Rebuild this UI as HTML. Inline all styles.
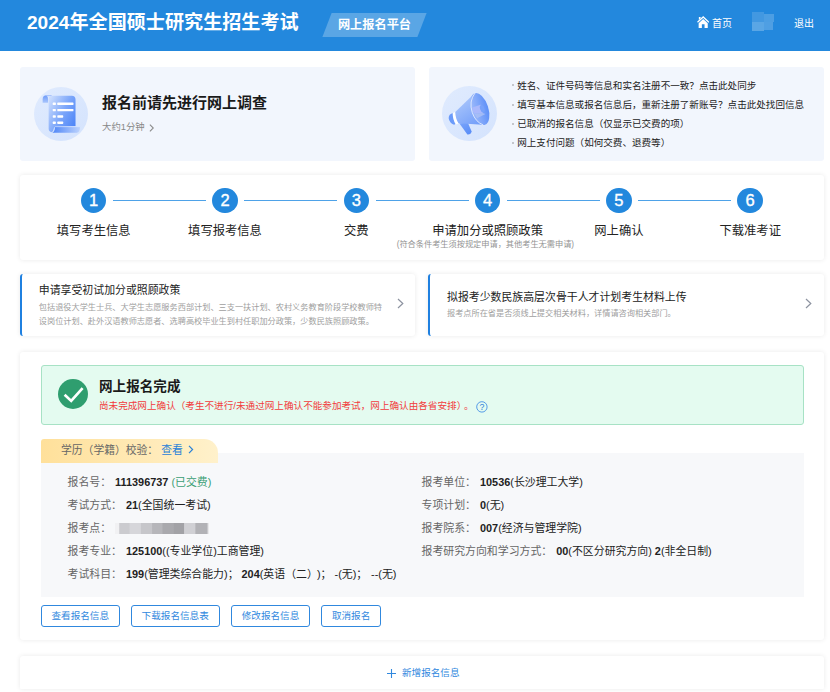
<!DOCTYPE html>
<html lang="zh-CN">
<head>
<meta charset="utf-8">
<title>2024年全国硕士研究生招生考试 网上报名平台</title>
<style>
*{box-sizing:border-box;margin:0;padding:0}
html,body{width:830px;height:692px;overflow:hidden;background:#fff}
body{font-family:"Liberation Sans","Noto Sans CJK SC",sans-serif;color:#222;position:relative;-webkit-font-smoothing:antialiased}
a{text-decoration:none;color:inherit}
.abs{position:absolute;white-space:nowrap}
/* header */
#hd{position:absolute;left:0;top:0;width:830px;height:51px;background:#2388dd}
#hd .title{left:27px;top:0;height:46px;line-height:46px;font-size:19.1px;font-weight:bold;color:#fff}
#hd .badge{left:327px;top:13px;width:95px;height:24px;background:rgba(255,255,255,.25);transform:skewX(-21deg)}
#hd .badgetx{left:327px;top:13px;width:95px;height:24px;line-height:24px;text-align:center;font-size:12.2px;font-weight:bold;color:#fff}
#hd .nav{top:1px;height:46px;line-height:46px;font-size:10px;color:#fff}
/* cards */
.card{position:absolute;background:#fff;border-radius:3px;box-shadow:0 0 5px rgba(0,0,0,.09)}
.info{position:absolute;background:#f2f6fd;border-radius:3px}
.bl{display:inline-block;width:2px;height:2px;background:#c4c6cc;vertical-align:middle;margin:0 3.5px 1px 1px}
.circ{position:absolute;width:55px;height:55px;border-radius:50%;background:linear-gradient(135deg,#e0ebfe,#d4e3fd)}
/* steps */
.step-c{position:absolute;top:188px;width:25.4px;height:25.4px;margin-left:.3px;border-radius:50%;background:#2388dd;color:#fff;font-size:16.5px;line-height:24px;text-align:center;-webkit-text-stroke:.35px #fff}
.step-l{position:absolute;top:200px;height:1.3px;background:#4ea2e8}
.step-t{position:absolute;top:220.6px;width:140px;text-align:center;font-size:12.3px;line-height:20px;color:#222}
/* policy */
.pol{position:absolute;top:274px;height:62px;background:#fff;border-radius:3px;box-shadow:0 0 5px rgba(0,0,0,.09);border-left:2.8px solid #1f80e0}
.pol .t{left:16.8px;font-size:10.9px;line-height:16px;color:#222}
.pol .d{left:16.8px;font-size:8.18px;line-height:14px;color:#a0a0a0}
.chev{position:absolute;width:7px;height:11px}
/* alert */
#alert{position:absolute;left:41px;top:365px;width:763px;height:59.8px;background:#e4fbf0;border:1px solid #a7e2c5;border-radius:3px}
/* tab */
#tab{position:absolute;left:41px;top:438.7px;width:176.5px;height:24.2px;border-radius:3px 14px 0 0;background:linear-gradient(90deg,#ffe09a,#fff1cb)}
#panel{position:absolute;left:41px;top:452.5px;width:763px;height:144.3px;background:#f7f8fa}
.row{position:absolute;margin-top:-.7px;font-size:10.9px;line-height:16px;white-space:nowrap;color:#222}
.row .k{color:#666;margin-right:4px}
.row b{font-weight:bold}
.btn{position:absolute;top:605px;height:21.8px;line-height:19.8px;border:1px solid #3088de;border-radius:3px;color:#3088de;font-size:9.6px;text-align:center;background:#fff}
</style>
</head>
<body>

<!-- header -->
<div id="hd">
  <div class="abs title">2024年全国硕士研究生招生考试</div>
  <div class="abs badge"></div>
  <div class="abs badgetx">网上报名平台</div>
  <svg class="abs" style="left:696.8px;top:15.8px" width="12.4" height="12.4" viewBox="0 0 12 12"><path d="M0.5 6.1 L6 0.9 L11.5 6.1" stroke="#fff" stroke-width="1.25" fill="none" stroke-linejoin="miter"/><path d="M6 2.9 L10.4 7 V12 H7.3 V8 H4.7 V12 H1.6 V7 Z M1.8 1 h1.7 v1.3 l-1.7 1.6z" fill="#fff"/></svg>
  <div class="abs nav" style="left:712px">首页</div>
  <div class="abs" style="left:752px;top:12.2px;width:12.2px;height:10.1px;background:rgba(255,255,255,.14)"></div><div class="abs" style="left:764.2px;top:13.6px;width:9.6px;height:8.7px;background:rgba(255,255,255,.19)"></div><div class="abs" style="left:752px;top:22.3px;width:12.2px;height:8.5px;background:rgba(255,255,255,.25)"></div><div class="abs" style="left:764.2px;top:22.3px;width:8.6px;height:7.7px;background:rgba(255,255,255,.2)"></div>
  <div class="abs nav" style="left:794px">退出</div>
</div>

<!-- info cards -->
<div class="info" style="left:20px;top:67px;width:395px;height:94px"></div>
<div class="circ" style="left:33.9px;top:86.9px;width:54.2px;height:54.2px"></div>
<svg class="abs" style="left:30px;top:84px" width="60" height="60" viewBox="0 0 692 692">
  <defs><linearGradient id="g1" x1="0" y1="0.15" x2="1" y2="0.85"><stop offset="0" stop-color="#c9dbfd"/><stop offset="0.5" stop-color="#7da7fa"/><stop offset="1" stop-color="#4a83f7"/></linearGradient>
  <linearGradient id="g2" x1="0" y1="0" x2="1" y2="0"><stop offset="0" stop-color="#4f86f7"/><stop offset="1" stop-color="#bdd3fd"/></linearGradient>
  <linearGradient id="g6" x1="0" y1="0" x2="0" y2="1"><stop offset="0" stop-color="#6f9cf9"/><stop offset="1" stop-color="#a9c5fc"/></linearGradient></defs>
  <path d="M146 216 V176 Q148 134 178 134 Q206 134 208 176 V216Z" fill="url(#g6)"/><path d="M178 131 H250 V140 H178Z" fill="#8db1fb"/>
  <path d="M215 178 Q215 136 257 136 H482 Q525 136 525 180 V486 H292 Q276 492 272 522 Q268 552 250 556 Q215 550 215 514 Z" fill="url(#g1)"/>
  <path d="M285 488 H578 Q578 560 540 563 H258 Q292 545 285 488Z" fill="url(#g2)"/>
  <path d="M287 492 H576" stroke="#fff" stroke-width="7" opacity=".75"/>
  <g fill="#fff"><rect x="262" y="214" width="36" height="28" rx="7"/><rect x="315" y="214" width="186" height="28" rx="7"/>
  <rect x="262" y="287" width="36" height="28" rx="7"/><rect x="315" y="287" width="186" height="28" rx="7"/>
  <rect x="262" y="361" width="36" height="28" rx="7"/><rect x="315" y="361" width="68" height="28" rx="7"/>
  <rect x="262" y="433" width="36" height="28" rx="7"/><rect x="315" y="433" width="68" height="28" rx="7"/></g>
</svg>
<div class="abs" style="left:102px;top:91px;font-size:15px;line-height:24px;font-weight:bold;color:#1a1a1a">报名前请先进行网上调查</div>
<div class="abs" style="left:102px;top:119px;font-size:9.4px;line-height:16px;color:#888">大约1分钟</div>
<svg class="abs" style="left:148.8px;top:123.5px" width="5.4" height="8" viewBox="0 0 5.4 8"><path d="M0.9 0.7 L4.3 4 L0.9 7.3" stroke="#8a8a8a" stroke-width="1.05" fill="none"/></svg>

<div class="info" style="left:429px;top:67px;width:395px;height:94px"></div>
<div class="circ" style="left:442px;top:86.4px"></div>
<svg class="abs" style="left:440px;top:84px" width="60" height="60" viewBox="0 0 692 692">
  <defs><linearGradient id="g3" x1="0.1" y1="0" x2="0.8" y2="1"><stop offset="0" stop-color="#b4cdfc"/><stop offset="1" stop-color="#6f9cf9"/></linearGradient>
  <linearGradient id="g4" x1="0" y1="0" x2="1" y2="0.2"><stop offset="0" stop-color="#a3befb"/><stop offset="1" stop-color="#6293f8"/></linearGradient>
  <linearGradient id="g5" x1="0" y1="0" x2="0.6" y2="1"><stop offset="0" stop-color="#7ba5fa"/><stop offset="1" stop-color="#5a8ef8"/></linearGradient></defs>
  <path d="M222 452 L322 446 L366 550 Q352 588 316 582 Z" fill="url(#g5)"/>
  <path d="M152 334 Q98 346 100 396 Q108 452 162 470 L190 456 Q152 402 152 334Z" fill="#6b9bfa"/>
  <path d="M146 336 L180 320 Q182 400 218 452 L182 466 Q146 410 146 336Z" fill="#fff"/>
  <path d="M176 322 L400 106 L560 300 L492 471 L214 454 Q178 400 176 322 Z" fill="url(#g3)"/>
  <ellipse cx="460" cy="288" rx="97" ry="192" transform="rotate(-18 460 288)" fill="url(#g4)"/>
  <path d="M395 340 L490 334 L524 346 L428 396Z" fill="#a9c0f4" opacity=".85"/>
  <path d="M372 272 L468 238 Q522 268 490 334 L394 340 Q372 312 372 272Z" fill="#aab9fc"/>
  <ellipse cx="487" cy="284" rx="25" ry="44" transform="rotate(-18 487 284)" fill="#76a1fa"/>
  <path d="M402 106 Q330 200 372 330 Q410 440 494 470" stroke="#fff" stroke-width="8" fill="none" stroke-linecap="round" opacity=".95"/>
</svg>
<div class="abs" style="left:510.7px;top:75.5px;font-size:9.57px;line-height:19.1px;color:#222">
  <div><span class="bl"></span>姓名、证件号码等信息和实名注册不一致？点击此处同步</div>
  <div><span class="bl"></span>填写基本信息或报名信息后，重新注册了新账号？点击此处找回信息</div>
  <div><span class="bl"></span>已取消的报名信息（仅显示已交费的项）</div>
  <div><span class="bl"></span>网上支付问题（如何交费、退费等）</div>
</div>

<!-- steps -->
<div class="card" style="left:20px;top:175px;width:804px;height:85px"></div>
<div class="step-l" style="left:113px;width:93px"></div>
<div class="step-l" style="left:244.3px;width:93px"></div>
<div class="step-l" style="left:375.6px;width:93px"></div>
<div class="step-l" style="left:506.9px;width:93px"></div>
<div class="step-l" style="left:638.2px;width:93px"></div>
<div class="step-c" style="left:80.7px">1</div>
<div class="step-c" style="left:212px">2</div>
<div class="step-c" style="left:343.3px">3</div>
<div class="step-c" style="left:474.6px">4</div>
<div class="step-c" style="left:605.9px">5</div>
<div class="step-c" style="left:737.2px">6</div>
<div class="step-t" style="left:23.7px">填写考生信息</div>
<div class="step-t" style="left:155px">填写报考信息</div>
<div class="step-t" style="left:286.3px">交费</div>
<div class="step-t" style="left:417.6px">申请加分或照顾政策</div>
<div class="step-t" style="left:548.9px">网上确认</div>
<div class="step-t" style="left:680.2px">下载准考证</div>
<div class="abs" style="left:385.4px;top:238.8px;width:200px;text-align:center;font-size:8.2px;line-height:12px;color:#939393">(符合条件考生须按规定申请，其他考生无需申请)</div>

<!-- policy cards -->
<div class="pol" style="left:20px;width:395px">
  <div class="abs t" style="top:8.4px">申请享受初试加分或照顾政策</div>
  <div class="abs d" style="top:27px">包括退役大学生士兵、大学生志愿服务西部计划、三支一扶计划、农村义务教育阶段学校教师特</div>
  <div class="abs d" style="top:41px">设岗位计划、赴外汉语教师志愿者、选聘高校毕业生到村任职加分政策，少数民族照顾政策。</div>
  <svg class="chev" style="left:375px;top:24px" viewBox="0 0 7 11"><path d="M1 1 L5.8 5.5 L1 10" stroke="#8d93a0" stroke-width="1.2" fill="none"/></svg>
</div>
<div class="pol" style="left:428.2px;width:395.8px">
  <div class="abs t" style="top:15.4px">拟报考少数民族高层次骨干人才计划考生材料上传</div>
  <div class="abs d" style="top:32.5px">报考点所在省是否须线上提交相关材料，详情请咨询相关部门。</div>
  <svg class="chev" style="left:375px;top:24px" viewBox="0 0 7 11"><path d="M1 1 L5.8 5.5 L1 10" stroke="#8d93a0" stroke-width="1.2" fill="none"/></svg>
</div>

<!-- main card -->
<div class="card" style="left:20px;top:352px;width:804px;height:288px"></div>
<div id="alert"></div>
<svg class="abs" style="left:57.5px;top:378.5px" width="30" height="30" viewBox="0 0 30 30"><circle cx="15" cy="15" r="15" fill="#2f9e6f"/><path d="M6.6 15.8 L13.2 21.9 L24.6 9.2" stroke="#fff" stroke-width="2.7" fill="none"/></svg>
<div class="abs" style="left:99px;top:376.5px;font-size:13.6px;line-height:20px;font-weight:bold;color:#1a1a1a">网上报名完成</div>
<div class="abs" style="left:99px;top:398px;font-size:9.6px;line-height:16px;color:#f23c3c">尚未完成网上确认（考生不进行/未通过网上确认不能参加考试，网上确认由各省安排）<span style="margin-left:2.5px">。</span></div>
<svg class="abs" style="left:476.1px;top:400.9px" width="11.8" height="11.8" viewBox="0 0 12 12"><circle cx="6" cy="6" r="5.3" stroke="#4a94e6" stroke-width=".95" fill="none"/><text x="6" y="9.2" font-size="9" text-anchor="middle" fill="#2f80d8" font-family="Liberation Sans, sans-serif">?</text></svg>

<div id="panel"></div>
<div id="tab"></div>
<div class="abs" style="left:61px;top:441.3px;font-size:10.8px;line-height:18px;color:#666">学历（学籍）校验：<span style="color:#2a82d8;margin-left:3px">查看</span></div>
<svg class="abs" style="left:187.6px;top:445.2px" width="6" height="9" viewBox="0 0 6 9"><path d="M1 0.8 L4.6 4.5 L1 8.2" stroke="#2a82d8" stroke-width="1.2" fill="none"/></svg>

<div class="row" style="left:67.5px;top:474.5px"><span class="k">报名号：</span><b>111396737</b> <span style="color:#3a9e74">(已交费)</span></div>
<div class="row" style="left:67.5px;top:497.5px"><span class="k">考试方式：</span><b>21</b>(全国统一考试)</div>
<div class="row" style="left:67.5px;top:520.5px"><span class="k">报考点：</span></div>
<div class="abs" style="left:115px;top:522.5px;width:94px;height:11px;background:linear-gradient(90deg,#f1f1f3 0,#f1f1f3 4%,#cbcbcf 5%,#cbcbcf 15%,#d6d6da 16%,#d6d6da 27%,#c6c6ca 28%,#c6c6ca 39%,#b6b6ba 40%,#b6b6ba 50%,#a9a9ad 51%,#a9a9ad 62%,#a2a2a6 63%,#a2a2a6 73%,#d0d0d4 74%,#d0d0d4 85%,#b2b2b6 86%,#b2b2b6 98%,#e8e8ea 99%)"></div>
<div class="row" style="left:67.5px;top:543.5px"><span class="k">报考专业：</span><b>125100</b>((专业学位)工商管理)</div>
<div class="row" style="left:67.5px;top:566.5px"><span class="k">考试科目：</span><b>199</b>(管理类综合能力)； <b>204</b>(英语（二）<span style="margin-left:4.6px">)</span>； -(无)； <span style="margin-left:.8px">--(无)</span></div>

<div class="row" style="left:421.5px;top:474.5px"><span class="k">报考单位：</span><b>10536</b>(长沙理工大学)</div>
<div class="row" style="left:421.5px;top:497.5px"><span class="k">专项计划：</span><b>0</b>(无)</div>
<div class="row" style="left:421.5px;top:520.5px"><span class="k">报考院系：</span><b>007</b>(经济与管理学院)</div>
<div class="row" style="left:421.5px;top:543.5px"><span class="k">报考研究方向和学习方式：</span><b>00</b>(不区分研究方向) <b>2</b>(非全日制)</div>

<div class="btn" style="left:40.5px;width:79.5px">查看报名信息</div>
<div class="btn" style="left:130.7px;width:89px">下载报名信息表</div>
<div class="btn" style="left:230.6px;width:79.8px">修改报名信息</div>
<div class="btn" style="left:321.2px;width:59.8px">取消报名</div>

<!-- bottom card -->
<div class="card" style="left:20px;top:655.5px;width:804px;height:33.2px;border-radius:3px 3px 1px 1px"></div>
<svg class="abs" style="left:387.2px;top:668.5px" width="9" height="9" viewBox="0 0 9 9"><path d="M4.5 0 V9 M0 4.5 H9" stroke="#3088de" stroke-width="1.1" fill="none"/></svg>
<div class="abs" style="left:402px;top:664.6px;font-size:9.58px;line-height:16px;color:#3088de">新增报名信息</div>

</body>
</html>
